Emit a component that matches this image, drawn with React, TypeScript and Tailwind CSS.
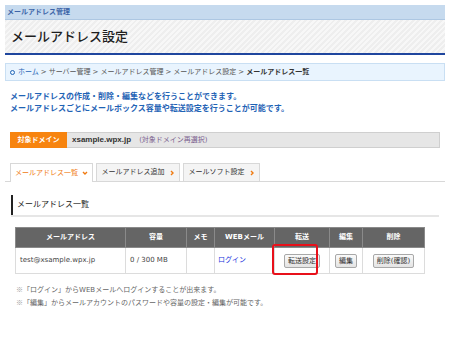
import React from 'react'

const font = "font-['DejaVu_Sans','Noto_Sans_CJK_JP',sans-serif]"

function Chevron({ down = false }: { down?: boolean }) {
  // 小さなオレンジの矢印
  return (
    <svg width="6" height="6" viewBox="0 0 6 6" className="shrink-0">
      {down ? (
        <path d="M1 2 L3 4 L5 2" fill="none" stroke="#f07a10" strokeWidth="1.4" />
      ) : (
        <path d="M2 1 L4 3 L2 5" fill="none" stroke="#f07a10" strokeWidth="1.4" />
      )}
    </svg>
  )
}

function Btn({ children }: { children: React.ReactNode }) {
  return (
    <span className="inline-block px-[3px] leading-[12px] h-[14px] text-[7px] text-[#333] border border-[#a8a8a8] rounded-[2px] bg-[linear-gradient(#fafafa,#e4e4e4)]">
      {children}
    </span>
  )
}

function Kome() {
  return <span className="font-['Noto_Sans_CJK_JP',sans-serif] text-[#999]">※</span>
}

const crumbs = ['サーバー管理', 'メールアドレス管理', 'メールアドレス設定']

export default function App() {
  return (
    <div className={`w-[450px] h-[346px] bg-white overflow-hidden ${font}`}>
      <div className="mx-[5px] pt-[5px]">
        {/* ヘッダー */}
        <div className="h-[15px] bg-[#c6daee] border-b border-[#adc7e2] pl-[2px] text-[7px] font-bold text-[#3d65a8] leading-[14px]">
          メールアドレス管理
        </div>
        <div className="h-[35px] bg-[repeating-linear-gradient(135deg,#eeeeee_0px,#eeeeee_2px,#f7f7f7_2px,#f7f7f7_4px)] border-b-2 border-[#1f469e] flex items-center pl-[6px] text-[13px] font-medium text-[#1e1e1e]">
          メールアドレス設定
        </div>

        {/* パンくず */}
        <div className="mt-[8px] h-[18px] bg-[#e9f4fe] border border-[#c9dff3] flex items-center pl-[4px] text-[7px] text-[#555] gap-[2px]">
          <span className="w-[5px] h-[5px] mr-[1px] rounded-full border border-[#1f63b5]" />
          <span className="text-[#1f63b5]">ホーム</span>
          {crumbs.map(c => (
            <React.Fragment key={c}>
              <span>&gt;</span>
              <span>{c}</span>
            </React.Fragment>
          ))}
          <span>&gt;</span>
          <span className="font-bold text-[#333]">メールアドレス一覧</span>
        </div>

        {/* 説明 */}
        <div className="mt-[10px] pl-[5px] text-[8px] font-bold text-[#1f63b5] leading-[12px]">
          <p>メールアドレスの作成・削除・編集などを行うことができます。</p>
          <p>メールアドレスごとにメールボックス容量や転送設定を行うことが可能です。</p>
        </div>

        {/* 対象ドメイン */}
        <div className="mt-[17px] ml-[5px] mr-[5px] flex h-[16px]">
          <div className="w-[57px] bg-[#f7840f] text-white text-[7px] font-bold flex items-center justify-center">
            対象ドメイン
          </div>
          <div className="flex-1 bg-[#e6e6e6] border border-[#cfcfcf] border-l-0 flex items-center pl-[5px] gap-[8px]">
            <span className="font-['Liberation_Sans',sans-serif] font-bold text-[8px] text-[#333]">xsample.wpx.jp</span>
            <span className="text-[7px] text-[#7b5e8e]">(対象ドメイン再選択)</span>
          </div>
        </div>

        {/* タブ */}
        <div className="mt-[15px] flex items-end gap-[3px] pl-[5px] border-b border-[#d8d8d8] h-[19px]">
          <div className="w-[83px] h-[19px] -mb-px bg-white border border-b-0 border-[#d8d8d8] flex items-center justify-center gap-[4px] text-[7px] text-[#f07a10]">
            メールアドレス一覧 <Chevron down />
          </div>
          <div className="w-[84px] h-[18px] bg-[#f4f4f4] border border-b-0 border-[#d8d8d8] flex items-center justify-center gap-[4px] text-[7px] text-[#333]">
            メールアドレス追加 <Chevron />
          </div>
          <div className="w-[77px] h-[18px] bg-[#f4f4f4] border border-b-0 border-[#d8d8d8] flex items-center justify-center gap-[4px] text-[7px] text-[#333]">
            メールソフト設定 <Chevron />
          </div>
        </div>

        {/* セクション見出し */}
        <div className="mt-[13px] ml-[6px] mr-[6px] h-[22px] border-b-2 border-[#e6e6e6] flex">
          <div className="h-[20px] border-l-2 border-[#222] pl-[4px] flex items-center text-[8px] text-[#222]">
            メールアドレス一覧
          </div>
        </div>

        {/* テーブル */}
        <div className="relative mt-[10px] ml-[10px] w-[409px]">
          <table className="w-[409px] table-fixed border-collapse text-[7px]">
            <colgroup>
              <col className="w-[110px]" />
              <col className="w-[61px]" />
              <col className="w-[28px]" />
              <col className="w-[60px]" />
              <col className="w-[55px]" />
              <col className="w-[33px]" />
              <col className="w-[62px]" />
            </colgroup>
            <thead>
              <tr className="h-[20px] bg-[#656565] text-white font-bold">
                {['メールアドレス', '容量', 'メモ', 'WEBメール', '転送', '編集', '削除'].map(h => (
                  <th key={h} className="border border-[#8a8a8a] font-bold text-center">{h}</th>
                ))}
              </tr>
            </thead>
            <tbody>
              <tr className="h-[26px] text-[#444]">
                <td className="border border-[#dcdcdc] pl-[4px]">test@xsample.wpx.jp</td>
                <td className="border border-[#dcdcdc] pl-[4px]">0 / 300 MB</td>
                <td className="border border-[#dcdcdc]" />
                <td className="border border-[#dcdcdc] pl-[3px] text-[#2233dd]">ログイン</td>
                <td className="border border-[#dcdcdc] text-center"><Btn>転送設定</Btn></td>
                <td className="border border-[#dcdcdc] text-center"><Btn>編集</Btn></td>
                <td className="border border-[#dcdcdc] text-center"><Btn>削除(確認)</Btn></td>
              </tr>
            </tbody>
          </table>
          {/* 注目枠 */}
          <div className="absolute left-[257px] top-[17px] w-[46px] h-[31px] border-2 border-[#e8101a] rounded-[3px]" />
        </div>

        {/* 注記 */}
        <div className="mt-[9px] ml-[11px] text-[7px] text-[#666] leading-[12px]">
          <p><Kome />「ログイン」からWEBメールへログインすることが出来ます。</p>
          <p><Kome />「編集」からメールアカウントのパスワードや容量の設定・編集が可能です。</p>
        </div>
      </div>
    </div>
  )
}
